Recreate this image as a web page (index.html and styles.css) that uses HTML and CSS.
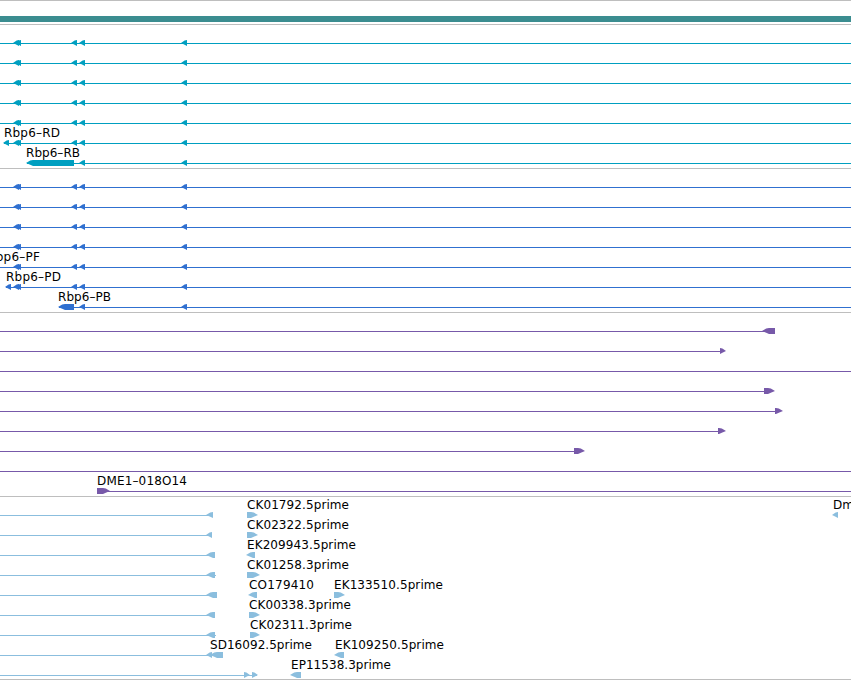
FILE: index.html
```html
<!DOCTYPE html>
<html lang="en">
<head>
    <meta charset="UTF-8">
    <meta name="viewport" content="width=device-width, initial-scale=1.0">
    <title>Genome tracks</title>
    <link rel="stylesheet" href="styles.css">
</head>
<body>
    <main id="browser">
        <div class="ruler"><div class="contig"></div></div>
        <section class="track transcripts" data-track="transcripts"></section>
        <section class="track proteins" data-track="proteins"></section>
        <section class="track bacs" data-track="bacs"></section>
        <section class="track ests" data-track="ests"></section>
    </main>
    <script src="tracks.js"></script>
</body>
</html>
```
FILE: styles.css
```css
body {
    margin: 0;
    background-color: #fff;
    font-family: "DejaVu Sans", Verdana, sans-serif;
    font-size: 12px;
}
#browser {
    width: 851px;
    height: 680px;
    overflow: hidden;
    display: flex;
    flex-direction: column;
}
.ruler {
    height: 23px;
    border-top: 1px solid #bebebe;
    border-bottom: 1px solid #bebebe;
}
.contig {
    height: 6px;
    margin-top: 15px;
    background-color: #3b8d90;
}
.track {
    padding-bottom: 3px;
    border-bottom: 1px solid #bebebe;
}
.row {
    display: block;
    width: 851px;
    height: 20px;
    overflow: visible;
}
.row text {
    fill: #000;
}
.transcripts {
    fill: #009fc0;
}
.proteins {
    fill: #3070d0;
}
.bacs {
    fill: #7759a9;
}
.ests {
    fill: #8bbede;
    padding-bottom: 2px;
}
```
FILE: tracks.js
```js
// feature: [start, end, direction], label: [x, text, width]
const exons = [[13, 19, '<'], [15, 21, '<'], [71, 77, '<'], [79, 85, '<'], [181, 187, '<']]
const full = () => ({ line: [0, 851], features: exons, labels: [] })

const tracks = {
    transcripts: [
        full(), full(), full(), full(), full(),
        { line: [4, 851], features: [[3, 9, '<'], ...exons], labels: [[4, 'Rbp6–RD', 56]] },
        { line: [27, 851], features: [[26, 74, '<'], ...exons.slice(3)], labels: [[26, 'Rbp6–RB', 54]] }
    ],
    proteins: [
        full(), full(), full(), full(),
        { line: [0, 851], features: exons, labels: [[-13, 'Rbp6–PF', 53]] },
        { line: [6, 851], features: [[5, 11, '<'], ...exons], labels: [[6, 'Rbp6–PD', 55]] },
        { line: [59, 851], features: [[58, 74, '<'], ...exons.slice(3)], labels: [[58, 'Rbp6–PB', 53]] }
    ],
    bacs: [
        { line: [0, 765], features: [[762, 775, '<']] },
        { line: [0, 720], features: [[720, 726, '>']] },
        { line: [0, 851], features: [] },
        { line: [0, 764], features: [[764, 775, '>']] },
        { line: [0, 775], features: [[775, 783, '>']] },
        { line: [0, 718], features: [[718, 726, '>']] },
        { line: [0, 574], features: [[574, 585, '>']] },
        { line: [0, 851], features: [] },
        { line: [108, 851], features: [[97, 110, '>']], labels: [[97, 'DME1–018O14', 90]] }
    ],
    ests: [
        { line: [0, 208], features: [[206, 213, '<'], [247, 258, '>'], [832, 838, '<']], labels: [[247, 'CK01792.5prime', 102], [833, 'Dm', 21]] },
        { line: [0, 208], features: [[206, 212, '<'], [247, 258, '>']], labels: [[247, 'CK02322.5prime', 102]] },
        { line: [0, 208], features: [[206, 215, '<'], [246, 255, '<']], labels: [[247, 'EK209943.5prime', 109]] },
        { line: [0, 216], features: [[206, 215, '<'], [247, 260, '>']], labels: [[247, 'CK01258.3prime', 102]] },
        { line: [0, 208], features: [[206, 217, '<'], [248, 257, '<'], [334, 345, '>']], labels: [[249, 'CO179410', 65], [334, 'EK133510.5prime', 109]] },
        { line: [0, 208], features: [[206, 215, '<'], [249, 260, '>']], labels: [[249, 'CK00338.3prime', 102]] },
        { line: [0, 216], features: [[206, 215, '<'], [250, 260, '>']], labels: [[250, 'CK02311.3prime', 102]] },
        { line: [0, 212], features: [[206, 212, '<'], [210, 223, '<'], [334, 344, '<']], labels: [[210, 'SD16092.5prime', 102], [335, 'EK109250.5prime', 109]] },
        { line: [0, 257], features: [[244, 250, '>'], [252, 258, '>'], [290, 301, '<']], labels: [[291, 'EP11538.3prime', 100]] }
    ]
}

// tapered head, at most 7px of the feature
function arrow([start, end, dir]) {
    const head = Math.min(7, end - start)
    const mid = head * 0.6
    if (dir === '<') {
        return `<polygon points="${start},18 ${start + mid},15.6 ${start + head},15 ${end},15 ${end},21 ${start + head},21 ${start + mid},19.8"/>`
    }
    return `<polygon points="${start},15 ${end - head},15 ${end - mid},15.6 ${end},18 ${end - mid},19.8 ${end - head},21 ${start},21"/>`
}

for (const section of document.querySelectorAll('.track')) {
    for (const row of tracks[section.dataset.track]) {
        const [from, to] = row.line
        const labels = (row.labels || []).map(([x, text, width]) =>
            `<text x="${x}" y="12" textLength="${width}">${text}</text>`)
        section.innerHTML += `<svg class="row"><rect x="${from}" y="18" width="${to - from}" height="1"/>`
            + row.features.map(arrow).join('') + labels.join('') + '</svg>'
    }
}
```
